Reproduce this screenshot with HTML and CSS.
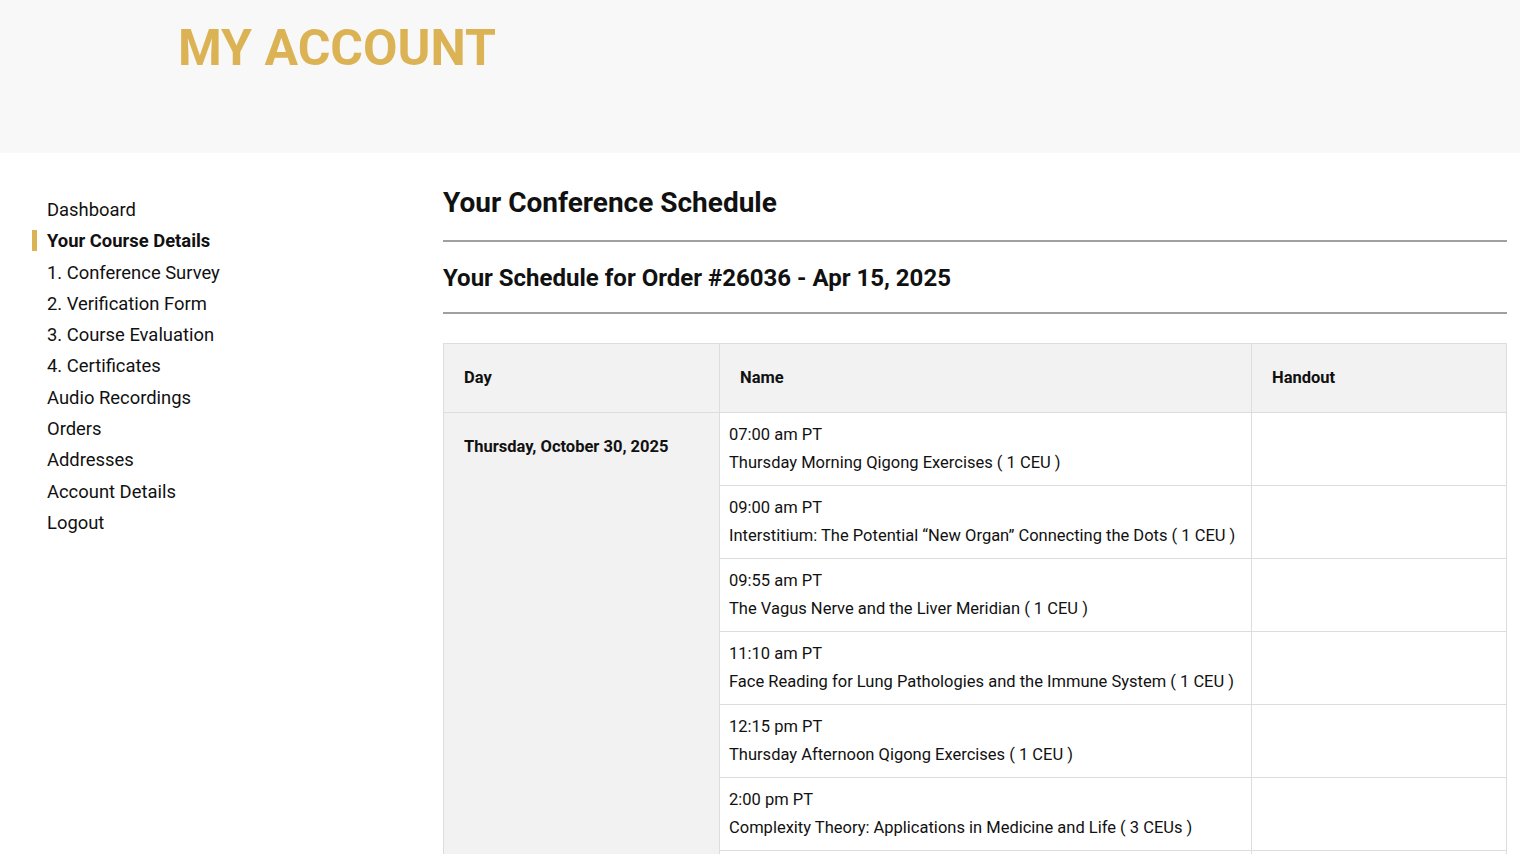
FILE: index.html
```html
<!DOCTYPE html>
<html>
<head>
    <meta charset="UTF-8">
    <title>My Account</title>
    <link rel="stylesheet" href="styles.css">
</head>
<body>
    <header class="page-header">
        <h1>MY ACCOUNT</h1>
    </header>
    <div class="layout">
        <nav class="account-nav">
            <a href="#">Dashboard</a>
            <a href="#" class="active">Your Course Details</a>
            <a href="#">1. Conference Survey</a>
            <a href="#">2. Verification Form</a>
            <a href="#">3. Course Evaluation</a>
            <a href="#">4. Certificates</a>
            <a href="#">Audio Recordings</a>
            <a href="#">Orders</a>
            <a href="#">Addresses</a>
            <a href="#">Account Details</a>
            <a href="#">Logout</a>
        </nav>
        <main class="account-content">
            <h2>Your Conference Schedule</h2>
            <hr>
            <h3>Your Schedule for Order #26036 - Apr 15, 2025</h3>
            <hr>
            <table class="schedule">
                <thead>
                    <tr>
                        <th class="col-day">Day</th>
                        <th class="col-name">Name</th>
                        <th class="col-handout">Handout</th>
                    </tr>
                </thead>
                <tbody>
                    <tr>
                        <td class="day" rowspan="7">Thursday, October 30, 2025</td>
                        <td class="session">07:00 am PT<br>Thursday Morning Qigong Exercises ( 1 CEU )</td>
                        <td></td>
                    </tr>
                    <tr>
                        <td class="session">09:00 am PT<br>Interstitium: The Potential “New Organ” Connecting the Dots ( 1 CEU )</td>
                        <td></td>
                    </tr>
                    <tr>
                        <td class="session">09:55 am PT<br>The Vagus Nerve and the Liver Meridian ( 1 CEU )</td>
                        <td></td>
                    </tr>
                    <tr>
                        <td class="session">11:10 am PT<br>Face Reading for Lung Pathologies and the Immune System ( 1 CEU )</td>
                        <td></td>
                    </tr>
                    <tr>
                        <td class="session">12:15 pm PT<br>Thursday Afternoon Qigong Exercises ( 1 CEU )</td>
                        <td></td>
                    </tr>
                    <tr>
                        <td class="session">2:00 pm PT<br>Complexity Theory: Applications in Medicine and Life ( 3 CEUs )</td>
                        <td></td>
                    </tr>
                    <tr>
                        <td class="session">3:30 pm PT<br>Thursday Closing Session ( 1 CEU )</td>
                        <td></td>
                    </tr>
                </tbody>
            </table>
        </main>
    </div>
</body>
</html>
```

FILE: styles.css
```css
body {
    margin: 0;
    font-family: Roboto, "Liberation Sans", sans-serif;
    color: #111;
    background: #fff;
}

.page-header {
    height: 153px;
    background-color: #f8f8f8;
    padding-left: 178px;
    box-sizing: border-box;
}

.page-header h1 {
    margin: 0;
    padding-top: 18px;
    font-size: 50px;
    line-height: 60px;
    font-weight: 700;
    color: #dbb354;
}

.layout {
    display: flex;
    padding: 0 13px 0 47px;
}

.account-nav {
    width: 396px;
    flex-shrink: 0;
    padding-top: 41px;
    display: flex;
    flex-direction: column;
}

.account-nav a {
    display: block;
    font-size: 18.4px;
    line-height: 31.3px;
    color: #111;
    text-decoration: none;
    position: relative;
}

.account-nav a.active {
    font-weight: 700;
}

.account-nav a.active::before {
    content: "";
    position: absolute;
    left: -15px;
    top: 5px;
    width: 5px;
    height: 21px;
    background-color: #dbb354;
}

.account-content {
    flex: 1;
    padding-top: 28px;
}

.account-content h2 {
    margin: 0;
    font-size: 28px;
    line-height: 44px;
    font-weight: 700;
}

.account-content hr {
    border: 0;
    border-top: 2px solid #a0a0a0;
    margin: 0;
}

.account-content h2 + hr {
    margin-top: 15px;
}

.account-content h3 {
    margin: 0;
    padding: 20px 0 18px;
    font-size: 24px;
    line-height: 32px;
    font-weight: 700;
}

.schedule {
    width: 100%;
    margin-top: 29px;
    border-collapse: collapse;
    font-size: 16.5px;
    line-height: 28px;
}

.schedule th,
.schedule td {
    border: 1px solid #ddd;
    text-align: left;
    vertical-align: top;
}

.schedule th {
    background-color: #f2f2f2;
    padding: 20px;
    font-weight: 700;
}

.col-day {
    width: 235px;
}

.col-handout {
    width: 214px;
}

.schedule td.day {
    background-color: #f2f2f2;
    font-weight: 700;
    padding: 20px;
}

.schedule td.session {
    padding: 8px 9px;
}
```
